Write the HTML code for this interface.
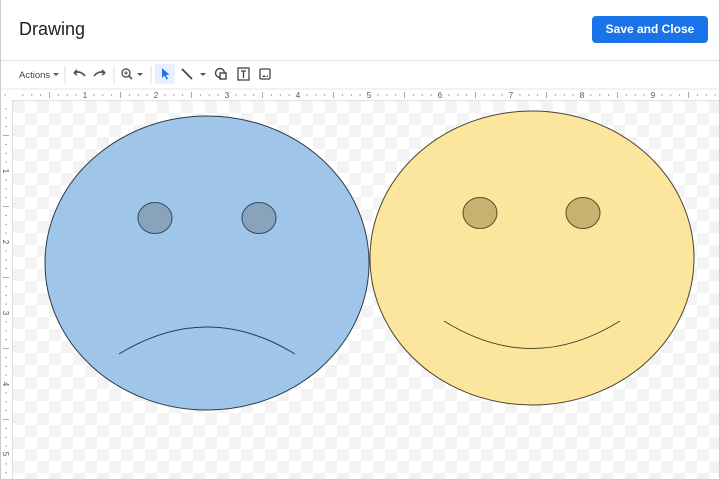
<!DOCTYPE html>
<html><head><meta charset="utf-8">
<style>
*{margin:0;padding:0;box-sizing:border-box}
body{width:720px;height:480px;overflow:hidden;background:#fff;font-family:"Liberation Sans",Arial,sans-serif;position:relative}
.title{position:absolute;left:19px;top:19px;font-size:18px;color:#202124}
.btn{position:absolute;left:592px;top:16px;width:116px;height:27px;background:#1a73e8;border-radius:4px;color:#fff;font-size:12px;font-weight:bold;text-align:center;line-height:27px}
.sep{position:absolute;left:0;top:60px;width:720px;height:1px;background:#e0e0e0}
.frame{position:absolute;left:0;top:0;width:720px;height:480px;border:1px solid #ccc;border-top:none;pointer-events:none}
</style></head><body>
<div class="title">Drawing</div>
<div class="btn">Save and Close</div>
<div class="sep"></div>
<svg width="720" height="480" style="position:absolute;left:0;top:0">
<defs>
<pattern id="chk" x="13" y="101" width="24" height="24" patternUnits="userSpaceOnUse">
<rect width="24" height="24" fill="#fff"/>
<rect width="12" height="12" fill="#f3f3f3"/>
<rect x="12" y="12" width="12" height="12" fill="#f3f3f3"/>
</pattern>
<pattern id="ht" x="14" y="89" width="71" height="11" patternUnits="userSpaceOnUse">
<g stroke="#aaa" stroke-width="1">
<line x1="8.9" y1="5" x2="8.9" y2="7"/><line x1="17.8" y1="5" x2="17.8" y2="7"/><line x1="26.6" y1="5" x2="26.6" y2="7"/>
<line x1="35.5" y1="3" x2="35.5" y2="9"/>
<line x1="44.4" y1="5" x2="44.4" y2="7"/><line x1="53.3" y1="5" x2="53.3" y2="7"/><line x1="62.1" y1="5" x2="62.1" y2="7"/>
</g></pattern>
<pattern id="vt" x="0" y="100" width="12" height="71" patternUnits="userSpaceOnUse">
<g stroke="#aaa" stroke-width="1">
<line y1="8.9" x1="5" y2="8.9" x2="7"/><line y1="17.8" x1="5" y2="17.8" x2="7"/><line y1="26.6" x1="5" y2="26.6" x2="7"/>
<line y1="35.5" x1="3" y2="35.5" x2="9"/>
<line y1="44.4" x1="5" y2="44.4" x2="7"/><line y1="53.3" x1="5" y2="53.3" x2="7"/><line y1="62.1" x1="5" y2="62.1" x2="7"/>
</g></pattern>
</defs>
<text x="19" y="78" font-size="9.5" fill="#444" font-family="Liberation Sans">Actions</text>
<path d="M53 73l3 3 3-3z" fill="#555"/>
<line x1="65" y1="66" x2="65" y2="84" stroke="#ddd"/>
<path d="M74 73l3-3M74 73l3 2M74 73q6-3 11 3" stroke="#555" stroke-width="1.6" fill="none"/>
<path d="M105 73l-3-3M105 73l-3 2M105 73q-6-3-11 3" stroke="#555" stroke-width="1.6" fill="none"/>
<line x1="114" y1="66" x2="114" y2="84" stroke="#ddd"/>
<circle cx="126" cy="73" r="4" stroke="#555" stroke-width="1.4" fill="none"/><line x1="129" y1="76" x2="132" y2="79" stroke="#555" stroke-width="1.6"/>
<path d="M124 73h4M126 71v4" stroke="#555"/>
<path d="M137 73l3 3 3-3z" fill="#555"/>
<line x1="151" y1="66" x2="151" y2="84" stroke="#ddd"/>
<rect x="155" y="64" width="20" height="20" rx="2" fill="#e8f0fe"/>
<path d="M162 68v10l2.5-2.5 2 4 1.5-.8-2-3.8h3.5z" fill="#1a73e8"/>
<line x1="182" y1="69" x2="192" y2="79" stroke="#444" stroke-width="1.8"/>
<path d="M200 73l3 3 3-3z" fill="#555"/>
<circle cx="220" cy="73" r="4.5" stroke="#444" stroke-width="1.4" fill="none"/><rect x="220" y="73" width="6" height="6" stroke="#444" stroke-width="1.4" fill="#fff"/>
<rect x="238" y="68" width="11" height="12" stroke="#444" stroke-width="1.3" fill="none"/>
<path d="M241 71h5M243.5 71v7" stroke="#444" stroke-width="1.3"/>
<rect x="260" y="69" width="10" height="10" rx="1" stroke="#444" stroke-width="1.3" fill="none"/><path d="M262 77l2-2 2 2 2-2v2z" fill="#444"/>
<rect x="0" y="89" width="720" height="11" fill="#fff"/>
<line x1="0" y1="89" x2="720" y2="89" stroke="#e6e6e6"/>
<rect x="0" y="89" width="720" height="11" fill="url(#ht)"/>
<rect x="0" y="100" width="12" height="380" fill="#fff"/>
<rect x="0" y="100" width="12" height="380" fill="url(#vt)"/>
<line x1="12.5" y1="100" x2="12.5" y2="480" stroke="#e0e0e0"/>
<line x1="12" y1="100.5" x2="720" y2="100.5" stroke="#e0e0e0"/>
<g font-size="8" fill="#555" font-family="Liberation Sans" text-anchor="middle">
<rect x="80" y="90" width="10" height="9" fill="#fff"/><text x="85" y="98">1</text>
<rect x="151" y="90" width="10" height="9" fill="#fff"/><text x="156" y="98">2</text>
<rect x="222" y="90" width="10" height="9" fill="#fff"/><text x="227" y="98">3</text>
<rect x="293" y="90" width="10" height="9" fill="#fff"/><text x="298" y="98">4</text>
<rect x="364" y="90" width="10" height="9" fill="#fff"/><text x="369" y="98">5</text>
<rect x="435" y="90" width="10" height="9" fill="#fff"/><text x="440" y="98">6</text>
<rect x="506" y="90" width="10" height="9" fill="#fff"/><text x="511" y="98">7</text>
<rect x="577" y="90" width="10" height="9" fill="#fff"/><text x="582" y="98">8</text>
<rect x="648" y="90" width="10" height="9" fill="#fff"/><text x="653" y="98">9</text>
<g transform="rotate(90)">
<text x="171" y="-3">1</text><text x="242" y="-3">2</text><text x="313" y="-3">3</text><text x="384" y="-3">4</text><text x="454" y="-3">5</text>
</g>
</g>
<rect x="13" y="101" width="706" height="379" fill="url(#chk)"/>
<ellipse cx="207" cy="263" rx="162" ry="147" fill="#9fc5e8" stroke="#2d3b4d" stroke-width="1"/>
<ellipse cx="155" cy="218" rx="17" ry="15.5" fill="#8aa3bd" stroke="#2f4a66" stroke-width="1"/>
<ellipse cx="259" cy="218" rx="17" ry="15.5" fill="#8aa3bd" stroke="#2f4a66" stroke-width="1"/>
<path d="M119 354Q207 300 295 354" stroke="#2d3b4d" stroke-width="1" fill="none"/>
<ellipse cx="532" cy="258" rx="162" ry="147" fill="#fce59c" stroke="#4a442f" stroke-width="1"/>
<ellipse cx="480" cy="213" rx="17" ry="15.5" fill="#c9b26f" stroke="#5a4d25" stroke-width="1"/>
<ellipse cx="583" cy="213" rx="17" ry="15.5" fill="#c9b26f" stroke="#5a4d25" stroke-width="1"/>
<path d="M444 321Q532 376 620 321" stroke="#4a442f" stroke-width="1" fill="none"/>
</svg>
<div class="frame"></div>
</body></html>
